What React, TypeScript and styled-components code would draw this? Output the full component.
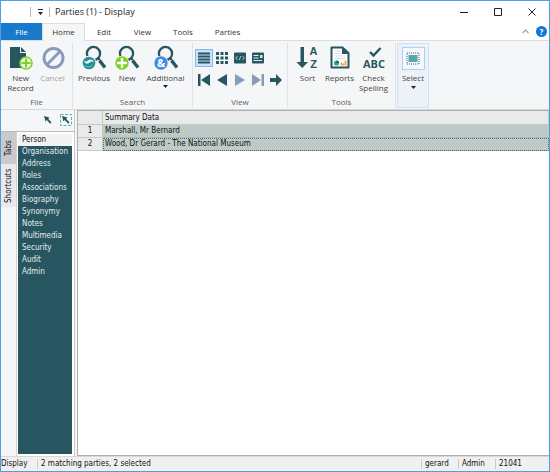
import React from "react";
import styled, { createGlobalStyle } from "styled-components";

const teal = "#275660";
const muted = "#8a9aba";
const ui = `"Open Sans", "Noto Sans", sans-serif`;
const grid = `"DejaVu Sans Condensed", "DejaVu Sans", sans-serif`;

const Global = createGlobalStyle`
  * { box-sizing: border-box; }
  body { margin: 0; font: 8px/10px ${ui}; color: #333; background: #fff; }
  button { font: inherit; color: inherit; background: none; border: 0; padding: 0; margin: 0; }
  svg { display: block; flex: none; }
`;

const Window = styled.div`
  min-height: 100vh;
  display: flex;
  flex-direction: column;
  border: 1px solid #4f9ee3;
  background: #fff;
`;

const TitleBar = styled.header`
  display: flex;
  align-items: center;
  height: 22px;
  flex: none;
`;

const QuickAccess = styled.div`
  display: flex;
  align-items: center;
  justify-content: center;
  width: 20px;
  height: 10px;
  margin: 0 5px 0 29px;
  border: solid #b5b5b5;
  border-width: 0 1px;
`;

const Title = styled.h1`
  flex: 1;
  margin: 0;
  font: 9px/12px ${ui};
  color: #222;
`;

const WindowButton = styled.button`
  display: flex;
  justify-content: center;
  width: 34px;
`;

const TabBar = styled.nav`
  display: flex;
  align-items: stretch;
  height: 18px;
  flex: none;
  border-bottom: 1px solid #dcdde0;
`;

const Tab = styled.button<{ $kind?: "file" | "active"; $width: number }>`
  width: ${(p) => p.$width}px;
  ${(p) => p.$kind === "file" && "background: #1979ca; color: #fff;"}
  ${(p) =>
    p.$kind === "active" &&
    "background: #f5f6f7; border: solid #dcdde0; border-width: 1px 1px 0; margin-bottom: -1px; padding-bottom: 2px;"}
`;

const TabTools = styled.div`
  display: flex;
  align-items: center;
  gap: 7px;
  margin-left: auto;
  padding-right: 2px;
`;

const Help = styled.button`
  width: 11px;
  height: 11px;
  border-radius: 50%;
  background: #0f78d4;
  color: #fff;
  font-weight: 700;
`;

const Ribbon = styled.section`
  display: flex;
  height: 69px;
  flex: none;
  padding: 2px 0 1px;
  background: #f5f6f7;
  border-bottom: 1px solid #d5d6d8;
`;

const Group = styled.div<{ $width: number }>`
  width: ${(p) => p.$width}px;
  display: flex;
  flex-direction: column;
  justify-content: space-between;
  align-items: center;
  border-right: 1px solid #e2e3e5;
`;

const GroupLabel = styled.div`
  padding-bottom: 1px;
  color: #5d5d5d;
`;

const Tools = styled.div`
  display: flex;
  padding-top: 2px;
`;

const RibbonButton = styled.button<{ $width: number; $disabled?: boolean }>`
  width: ${(p) => p.$width}px;
  display: flex;
  flex-direction: column;
  align-items: center;
  justify-content: flex-start;
  gap: 2px;
  color: ${(p) => (p.$disabled ? "#a3a3a3" : "#444")};
`;

const SelectButton = styled.button`
  width: 32px;
  margin-left: 1px;
  display: flex;
  flex-direction: column;
  align-items: center;
  justify-content: flex-start;
  gap: 3px;
  padding-top: 3px;
  border: 1px solid #cde4f7;
  background: #ecf2f7;
  color: #444;
`;

const SelectFrame = styled.span`
  display: flex;
  align-items: center;
  justify-content: center;
  width: 23px;
  height: 23px;
  border: 1px solid #a9d2f5;
  background: #f5f9fd;
`;

const ViewGrid = styled.div`
  display: grid;
  grid-template-columns: repeat(5, 18px);
  grid-template-rows: 18px 18px;
  row-gap: 4px;
  padding-top: 6px;
`;

const ViewButton = styled.button<{ $on?: boolean }>`
  display: flex;
  align-items: center;
  justify-content: center;
  border: 1px solid ${(p) => (p.$on ? "#83b8ee" : "transparent")};
  background: ${(p) => (p.$on ? "#cbe1f7" : "none")};
`;

const Body = styled.main`
  flex: 1;
  display: flex;
  background: #f5f6f7;
`;

const Side = styled.aside`
  width: 74px;
  flex: none;
  display: flex;
  flex-direction: column;
  border-right: 1px solid #c9c9c9;
`;

const SideTools = styled.div`
  display: flex;
  justify-content: flex-end;
  gap: 6px;
  padding: 4px 2px 0 0;
  height: 22px;
  border-bottom: 1px solid #b9b9b9;
`;

const SideBody = styled.div`
  flex: 1;
  display: flex;
`;

const VerticalTabs = styled.div`
  display: flex;
  flex-direction: column;
  width: 15px;
`;

const VerticalTab = styled.button<{ $active?: boolean }>`
  writing-mode: vertical-rl;
  transform: rotate(180deg);
  display: flex;
  align-items: center;
  justify-content: center;
  height: ${(p) => (p.$active ? 32 : 43)}px;
  font: 8px/14px ${grid};
  color: #111;
  background: ${(p) => (p.$active ? "#cacaca" : "#e9e9e9")};
`;

const NavFrame = styled.div`
  flex: 1;
  padding: 2px 2px 2px 1px;
  border-left: 1px solid #d2d2d2;
  background: #fff;
  display: flex;
`;

const NavList = styled.ul`
  flex: 1;
  margin: 0;
  padding: 0;
  list-style: none;
  background: ${teal};
`;

const NavLink = styled.a<{ $active?: boolean }>`
  display: block;
  padding-left: 4px;
  font: 8px/12px ${grid};
  text-decoration: none;
  color: ${(p) => (p.$active ? "#111" : "#e4ecee")};
  background: ${(p) => (p.$active ? "#f3f3f3" : "none")};
`;

const DataPane = styled.div`
  flex: 1;
  margin-left: 2px;
  border: solid #aeb0b0;
  border-width: 1px 0 1px 1px;
  background: #fff;
`;

const Table = styled.table`
  width: 100%;
  table-layout: fixed;
  border-collapse: separate;
  border-spacing: 0;
  font: 8px/12px ${grid};
  color: #111;
`;

const Cell = styled.th<{ $narrow?: boolean }>`
  width: ${(p) => (p.$narrow ? "25px" : "auto")};
  height: 13px;
  padding: 0 0 0 ${(p) => (p.$narrow ? 0 : 2)}px;
  font-weight: 400;
  text-align: ${(p) => (p.$narrow ? "center" : "left")};
  background: #e9eaeb;
  border: solid #c7c9c9;
  border-width: 0 1px 1px 0;
  thead & { height: 14px; }
`;

const DataCell = styled.td<{ $focused?: boolean }>`
  height: 13px;
  padding: 0 0 0 2px;
  background: #bccbc7;
  border-bottom: 1px solid #aab8b5;
  ${(p) => p.$focused && "outline: 1px dotted #666; outline-offset: -1px;"}
`;

const Status = styled.footer`
  display: flex;
  align-items: center;
  height: 15px;
  flex: none;
  background: #f0f0f0;
  border-top: 1px solid #d8d8d8;
  font: 8px/10px ${grid};
  color: #111;
`;

const StatusItem = styled.span<{ $width?: number }>`
  ${(p) => (p.$width ? `width: ${p.$width}px; flex: none;` : "flex: 1;")}
  padding-left: 3px;
  border-left: 1px solid #c9c9c9;
  &:first-child { border: 0; padding: 0; }
`;

const Caret = () => (
  <svg width="5" height="3" viewBox="0 0 5 3"><path d="M0 0h5L2.5 3z" fill="#222" /></svg>
);

const Lens = ({ children }: { children: React.ReactNode }) => (
  <svg width="26" height="26" viewBox="0 0 26 26" fill="none">
    <circle cx="12.5" cy="8.5" r="6.6" stroke={teal} strokeWidth="2.3" />
    <path d="M17 13l2 2" stroke={teal} strokeWidth="2" />
    <path d="M18.5 15.5l5.5 7" stroke={teal} strokeWidth="3.4" />
    <circle cx="8" cy="18" r="7.3" fill="#f5f6f7" />
    {children}
  </svg>
);

const NewRecordIcon = () => (
  <svg width="26" height="26" viewBox="0 0 26 26" fill="none">
    <path d="M2 2h10v6h6v15H2z" fill={teal} />
    <path d="M13 2l5 5h-5z" fill={teal} />
    <circle cx="18" cy="18" r="6" fill="#f5f6f7" stroke="#79d321" strokeWidth="1.6" />
    <path d="M18 13.5v9M13.5 18h9" stroke="#79d321" strokeWidth="2.2" />
  </svg>
);

const CancelIcon = () => (
  <svg width="26" height="26" viewBox="0 0 26 26" fill="none" stroke={muted} strokeWidth="3">
    <circle cx="13.5" cy="13" r="9.5" />
    <path d="M20 6.5L7 19.5" />
  </svg>
);

const PreviousIcon = () => (
  <Lens>
    <circle cx="8" cy="18" r="6.3" fill="#248f98" />
    <path d="M3.2 15.5c.3 3.500 3.300 4 4.800 2.500s3.300-2.200 5-.6c-.6-3.200-4.200-3.700-5.700-2.200s-2.600 1.900-4.100.3z" fill="#eef7f7" />
    <path d="M4 20.500c2 2 5.500 2 7.500-.5" stroke="#8fcace" strokeWidth=".8" />
  </Lens>
);

const PlusIcon = () => (
  <Lens>
    <circle cx="8" cy="18" r="6.7" fill="#79d321" />
    <path d="M8 13v10M3 18h10" stroke="#fff" strokeWidth="2.4" />
  </Lens>
);

const AdditionalIcon = () => (
  <Lens>
    <circle cx="8" cy="18" r="6.7" fill="#3f8ce8" />
    <text x="8" y="22" textAnchor="middle" fontFamily="Open Sans" fontSize="11" fontWeight="700" fill="#fff">&amp;</text>
  </Lens>
);

const SortIcon = () => (
  <svg width="26" height="26" viewBox="0 0 26 26" fill={teal}>
    <path d="M5.500 2h3.500v15h4L7.200 23 1.500 17h4z" />
    <g fontFamily="Liberation Sans" fontSize="11" fontWeight="700" textAnchor="middle">
      <text x="18.500" y="10">A</text>
      <text x="18.500" y="23">Z</text>
    </g>
  </svg>
);

const ReportIcon = () => (
  <svg width="26" height="26" viewBox="0 0 26 26" fill="none">
    <path d="M4.500 2.500h11l6 5.500v14.500h-17z" fill="#fff" stroke={teal} strokeWidth="2" strokeLinejoin="round" />
    <path d="M15 2l6.500 7H15z" fill={teal} />
    <path d="M7.500 6h6M7.500 8.500h6M7.500 11h11M7.500 13.500h11" stroke="#d5dde0" />
    <circle cx="9.500" cy="18" r="2.600" fill="#1fa99b" />
    <path d="M9.500 18v-2.600a2.600 2.600 0 0 1 2.600 2.600z" fill={teal} />
    <path d="M14.500 20.500v-3M16.500 20.500v-2M18.500 20.500v-5" stroke="#ee9c3c" strokeWidth="1.600" />
  </svg>
);

const SpellingIcon = () => (
  <svg width="28" height="26" viewBox="0 0 28 26" fill="none">
    <path d="M10 7l3.500 3.500L20.500 3" stroke={teal} strokeWidth="2.400" />
    <text x="14" y="23" textAnchor="middle" fontFamily="Open Sans" fontSize="11" fontWeight="700" fill={teal}>ABC</text>
  </svg>
);

const SelectIcon = () => (
  <svg width="14" height="13" viewBox="0 0 14 13" fill="none">
    <rect x="1" y="1" width="12" height="11" stroke="#46606a" strokeDasharray="1 1" />
    <rect x="2.500" y="3" width="9" height="7" fill="#55a8ac" />
  </svg>
);

const ListIcon = () => (
  <svg width="12" height="12" viewBox="0 0 12 12" stroke={teal} strokeWidth="2">
    <path d="M0 1.500h12M0 4.500h12M0 7.500h12M0 10.500h12" />
  </svg>
);

const TilesIcon = () => (
  <svg width="12" height="12" viewBox="0 0 12 12" stroke={teal} strokeWidth="3" strokeDasharray="3 1.500">
    <path d="M0 1.500h12M0 6h12M0 10.500h12" />
  </svg>
);

const CodeIcon = () => (
  <svg width="12" height="12" viewBox="0 0 12 12" fill="none">
    <rect y=".5" width="12" height="11" rx="1" fill={teal} />
    <path d="M3.500 4l-2 2 2 2M8.500 4l2 2-2 2M6.700 4L5.300 8" stroke="#d6e4e6" strokeWidth=".8" />
  </svg>
);

const PageIcon = () => (
  <svg width="12" height="12" viewBox="0 0 12 12" fill="none">
    <rect y=".5" width="12" height="11" rx="1" fill={teal} />
    <path d="M1.500 3.500h5M1.500 6h5M1.500 8.500h8.500" stroke="#e6eef0" />
    <path d="M8 3h2.500v3H8z" fill="#d6e4e6" />
  </svg>
);

const Shape = ({ d, fill = teal }: { d: string; fill?: string }) => (
  <svg width="12" height="12" viewBox="0 0 12 12"><path d={d} fill={fill} /></svg>
);

const cursorPath = "M2 2l5.500 1.500-1.300 1.300 3.300 3.700-1.300 1.200-3.400-3.600L3.500 7.500z";

const sections = [
  "Person", "Organisation", "Address", "Roles", "Associations", "Biography",
  "Synonymy", "Notes", "Multimedia", "Security", "Audit", "Admin",
];

const rows = ["Marshall, Mr Bernard", "Wood, Dr Gerard - The National Museum"];

export default function App() {
  return (
    <Window>
      <Global />
      <TitleBar>
        <QuickAccess>
          <svg width="5" height="6" viewBox="0 0 5 6"><path d="M0 0h5v1H0zM0 3h5L2.500 6z" fill="#222" /></svg>
        </QuickAccess>
        <Title>Parties (1) - Display</Title>
        <WindowButton aria-label="Minimise">
          <svg width="8" height="8" viewBox="0 0 8 8" stroke="#222"><path d="M0 4.500h8" /></svg>
        </WindowButton>
        <WindowButton aria-label="Maximise">
          <svg width="8" height="8" viewBox="0 0 8 8" stroke="#222" fill="none"><path d="M.5.5h7v7h-7z" /></svg>
        </WindowButton>
        <WindowButton aria-label="Close">
          <svg width="8" height="8" viewBox="0 0 8 8" stroke="#222"><path d="M.5.5l7 7M7.500.5l-7 7" /></svg>
        </WindowButton>
      </TitleBar>

      <TabBar>
        <Tab $kind="file" $width={41}>File</Tab>
        <Tab $kind="active" $width={43}>Home</Tab>
        <Tab $width={38}>Edit</Tab>
        <Tab $width={39}>View</Tab>
        <Tab $width={42}>Tools</Tab>
        <Tab $width={47}>Parties</Tab>
        <TabTools>
          <svg width="7" height="5" viewBox="0 0 7 5" fill="none" stroke="#a8a8a8" strokeWidth="1.300"><path d="M.5 4l3-3 3 3" /></svg>
          <Help>?</Help>
        </TabTools>
      </TabBar>

      <Ribbon>
        <Group $width={72}>
          <Tools>
            <RibbonButton $width={32}><NewRecordIcon />New Record</RibbonButton>
            <RibbonButton $width={32} $disabled><CancelIcon />Cancel</RibbonButton>
          </Tools>
          <GroupLabel>File</GroupLabel>
        </Group>
        <Group $width={120}>
          <Tools>
            <RibbonButton $width={33}><PreviousIcon />Previous</RibbonButton>
            <RibbonButton $width={33}><PlusIcon />New</RibbonButton>
            <RibbonButton $width={44}><AdditionalIcon />Additional<Caret /></RibbonButton>
          </Tools>
          <GroupLabel>Search</GroupLabel>
        </Group>
        <Group $width={95}>
          <ViewGrid>
            <ViewButton $on aria-label="List"><ListIcon /></ViewButton>
            <ViewButton aria-label="Tiles"><TilesIcon /></ViewButton>
            <ViewButton aria-label="Code"><CodeIcon /></ViewButton>
            <ViewButton aria-label="Page"><PageIcon /></ViewButton>
            <span />
            <ViewButton aria-label="First"><Shape d="M0 0h2.500v12H0zM12 0v12L3 6z" /></ViewButton>
            <ViewButton aria-label="Back"><Shape d="M11 0v12L1 6z" /></ViewButton>
            <ViewButton aria-label="Forward"><Shape d="M1 0v12l10-6z" fill={muted} /></ViewButton>
            <ViewButton aria-label="Last"><Shape d="M12 0H9.500v12H12zM0 0v12l9-6z" fill={muted} /></ViewButton>
            <ViewButton aria-label="Go"><Shape d="M0 4h6V0l6 6-6 6V8H0z" /></ViewButton>
          </ViewGrid>
          <GroupLabel>View</GroupLabel>
        </Group>
        <Group $width={108}>
          <Tools>
            <RibbonButton $width={30}><SortIcon />Sort</RibbonButton>
            <RibbonButton $width={34}><ReportIcon />Reports</RibbonButton>
            <RibbonButton $width={34}><SpellingIcon />Check Spelling</RibbonButton>
          </Tools>
          <GroupLabel>Tools</GroupLabel>
        </Group>
        <SelectButton>
          <SelectFrame><SelectIcon /></SelectFrame>
          Select
          <Caret />
        </SelectButton>
      </Ribbon>

      <Body>
        <Side>
          <SideTools>
            <Shape d={cursorPath} />
            <svg width="12" height="12" viewBox="0 0 12 12">
              <rect x=".5" y=".5" width="11" height="11" fill="none" stroke="#55b5b0" strokeDasharray="3 1.500" />
              <path d={cursorPath} fill={teal} />
            </svg>
          </SideTools>
          <SideBody>
            <VerticalTabs>
              <VerticalTab $active>Tabs</VerticalTab>
              <VerticalTab>Shortcuts</VerticalTab>
            </VerticalTabs>
            <NavFrame>
              <NavList>
                {sections.map((name, i) => (
                  <li key={name}><NavLink href="#" $active={i === 0}>{name}</NavLink></li>
                ))}
              </NavList>
            </NavFrame>
          </SideBody>
        </Side>
        <DataPane>
          <Table>
            <thead>
              <tr><Cell $narrow /><Cell>Summary Data</Cell></tr>
            </thead>
            <tbody>
              {rows.map((text, i) => (
                <tr key={text}>
                  <Cell $narrow scope="row">{i + 1}</Cell>
                  <DataCell $focused={i === 1}>{text}</DataCell>
                </tr>
              ))}
            </tbody>
          </Table>
        </DataPane>
      </Body>

      <Status>
        <StatusItem $width={36}>Display</StatusItem>
        <StatusItem>2 matching parties, 2 selected</StatusItem>
        <StatusItem $width={37}>gerard</StatusItem>
        <StatusItem $width={37}>Admin</StatusItem>
        <StatusItem $width={54}>21041</StatusItem>
      </Status>
    </Window>
  );
}
